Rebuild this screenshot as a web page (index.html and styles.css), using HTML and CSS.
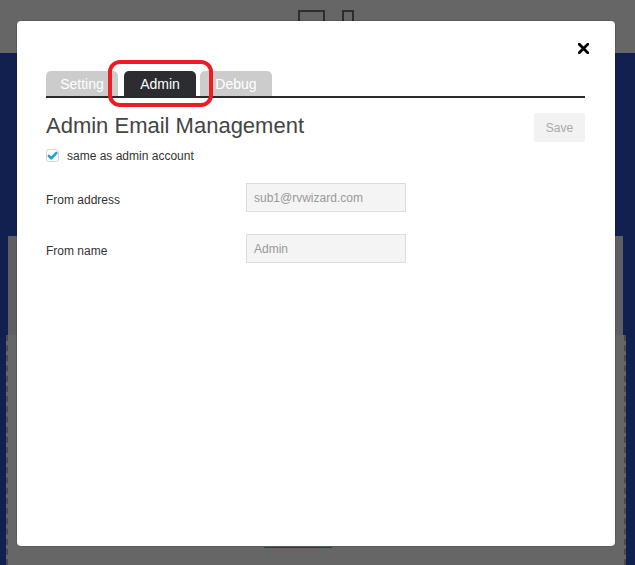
FILE: index.html
```html
<!DOCTYPE html>
<html>
<head>
<meta charset="utf-8">
<link rel="stylesheet" href="styles.css">
</head>
<body>
<div class="page">
  <header class="topbar">
    <span class="top-icon wide"></span>
    <span class="top-icon narrow"></span>
  </header>
  <main class="main">
    <div class="panel">
      <div class="panel-top"></div>
      <div class="panel-body"></div>
    </div>
    <div class="bottom-line"></div>
  </main>
</div>

<div class="modal">
  <button class="close" aria-label="Close">
    <svg width="11" height="11" viewBox="0 0 11 11"><path d="M1.3 1.3 L9.7 9.7 M9.7 1.3 L1.3 9.7" stroke="#000" stroke-width="2.8" stroke-linecap="square"/></svg>
  </button>
  <nav class="tabs">
    <span class="tab">Setting</span>
    <span class="tab active">Admin</span>
    <span class="tab last">Debug</span>
  </nav>
  <span class="highlight"></span>
  <div class="title-row">
    <h1 class="title">Admin Email Management</h1>
    <button class="save">Save</button>
  </div>
  <label class="check-row">
    <span class="checkbox">
      <svg width="13" height="13" viewBox="0 0 13 13"><rect x="0.5" y="0.5" width="12" height="12" rx="2" fill="#fff" stroke="#d5d5d5"/><path d="M2.8 6.8 L5.3 9.3 L10.4 3.8" fill="none" stroke="#1a9fe0" stroke-width="2.5" stroke-linecap="round" stroke-linejoin="round"/></svg>
    </span>
    same as admin account
  </label>
  <div class="form">
    <div class="form-row">
      <span class="label">From address</span>
      <span class="field">sub1@rvwizard.com</span>
    </div>
    <div class="form-row">
      <span class="label">From name</span>
      <span class="field">Admin</span>
    </div>
  </div>
</div>
</body>
</html>
```
FILE: styles.css
```css
* { box-sizing: border-box; }
html, body { margin: 0; padding: 0; }
body {
  width: 635px;
  height: 565px;
  overflow: hidden;
  background: #12204f;
  font-family: "Liberation Sans", Arial, sans-serif;
  position: relative;
}
.page { height: 565px; display: flex; flex-direction: column; }
.topbar {
  height: 53px;
  background: #666;
  display: flex;
  align-items: flex-start;
  padding: 10px 0 0 298px;
  gap: 17px;
}
.top-icon {
  display: block;
  height: 14px;
  border: 2px solid #2e2e2e;
  border-bottom: none;
}
.top-icon.wide { width: 27px; }
.top-icon.narrow { width: 12px; }
.main {
  flex: 1;
  padding-top: 183px;
  display: flex;
  flex-direction: column;
}
.panel {
  margin-left: 8px;
  width: 615px;
  flex: 1;
  display: flex;
  flex-direction: column;
}
.panel-top { height: 99px; background: #5d5f63; }
.panel-body {
  flex: 1;
  margin: 0 -3px 0 -2px;
  background: #666;
  border: 2px dashed #4a4a4a;
  border-top: none;
  border-bottom: none;
}
.bottom-line {
  position: absolute;
  left: 264px;
  top: 547px;
  width: 68px;
  height: 1px;
  background: #1c4636;
}

.modal {
  position: absolute;
  left: 17px;
  top: 21px;
  width: 598px;
  height: 525px;
  background: #fff;
  border-radius: 4px;
  box-shadow: 0 0 0 1px rgba(0,0,0,0.1);
  padding: 50px 30px 0 29px;
}
.close {
  position: absolute;
  right: 26px;
  top: 22px;
  width: 11px;
  height: 11px;
  padding: 0;
  border: none;
  background: none;
  display: block;
}
.close svg { display: block; }
.tabs {
  display: flex;
  height: 27px;
  border-bottom: 2px solid #2a2a2a;
  gap: 6px;
}
.tab {
  width: 72px;
  height: 25px;
  background: #ccc;
  color: #fff;
  font-size: 14px;
  border-radius: 5px 5px 0 0;
  display: flex;
  align-items: center;
  justify-content: center;
  padding-top: 1px;
}
.tab.active { background: #2b2d31; }
.tab.last { margin-left: -2px; }
.highlight {
  position: absolute;
  left: 91px;
  top: 39px;
  width: 105px;
  height: 47px;
  border: 4px solid #ec1c24;
  border-radius: 12px;
}
.title-row {
  display: flex;
  justify-content: space-between;
  align-items: flex-start;
  margin-top: 15px;
}
.title {
  margin: 0;
  font-size: 22px;
  font-weight: normal;
  color: #444;
  line-height: 30px;
  margin-top: -2px;
}
.save {
  width: 51px;
  height: 29px;
  border: none;
  background: #f2f2f2;
  color: #aaa;
  font-family: "Liberation Sans", Arial, sans-serif;
  font-size: 12px;
  padding: 0;
  border-radius: 2px;
}
.check-row {
  display: flex;
  align-items: center;
  gap: 8px;
  font-size: 12px;
  color: #333;
  margin-top: 7px;
  height: 13px;
}
.checkbox { display: block; width: 13px; height: 13px; }
.checkbox svg { display: block; }
.form {
  margin-top: 21px;
  display: flex;
  flex-direction: column;
  gap: 22px;
}
.form-row {
  display: flex;
  align-items: center;
}
.label {
  width: 200px;
  font-size: 12px;
  color: #333;
  padding-top: 4px;
}
.field {
  width: 160px;
  height: 29px;
  background: #f4f4f4;
  border: 1px solid #ddd;
  color: #999;
  font-size: 12px;
  display: flex;
  align-items: center;
  padding-left: 7px;
}
```
